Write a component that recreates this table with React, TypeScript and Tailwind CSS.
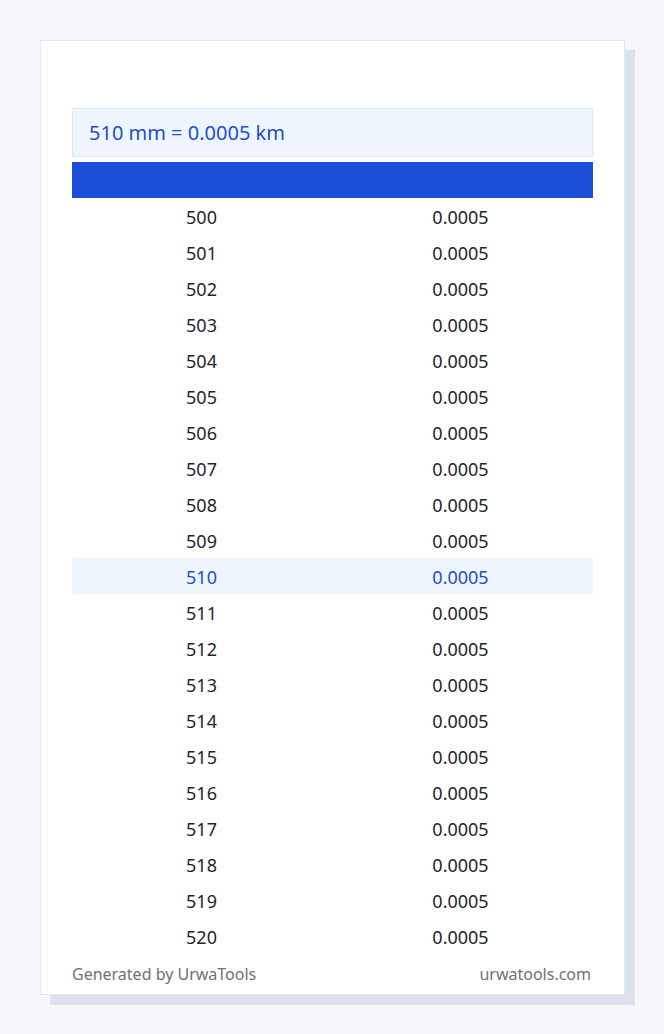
const rows = Array.from({ length: 21 }, (_, i) => 500 + i);

export default function App() {
  return (
    <div
      className="min-h-[1034px] w-full bg-[#f5f7fb] pt-10 pl-10"
      style={{ fontFamily: '"Noto Sans", sans-serif' }}
    >
      <div className="w-[585px] border border-[#dfe7fa] bg-white px-[31px] pt-[67px] pb-[9px] shadow-[10px_10px_0_#dae2ef]">
        <div className="flex h-[49px] items-center border border-[#dbe7fb] bg-[#eef5ff] px-4 text-[20px] text-[#1e4fc8]">
          510 mm = 0.0005 km
        </div>
        <div className="mt-[5px] h-9 bg-[#1c4fd7]"></div>
        <div>
          {rows.map((n) => {
            const active = n === 510;
            return (
              <div
                key={n}
                className={
                  active
                    ? "grid h-9 grid-cols-2 items-center bg-[#eef5ff] pt-[2px] pr-[3px] text-center text-[18px] text-[#1e4fc8]"
                    : "grid h-9 grid-cols-2 items-center pt-[2px] pr-[3px] text-center text-[18px] text-[#1f2430]"
                }
              >
                <span>{n}</span>
                <span>0.0005</span>
              </div>
            );
          })}
        </div>
        <div className="flex items-center justify-between pt-[9px] text-[16px] leading-[22px] text-[#6b7280]">
          <span>Generated by UrwaTools</span>
          <span className="pr-[2px]">urwatools.com</span>
        </div>
      </div>
    </div>
  );
}
